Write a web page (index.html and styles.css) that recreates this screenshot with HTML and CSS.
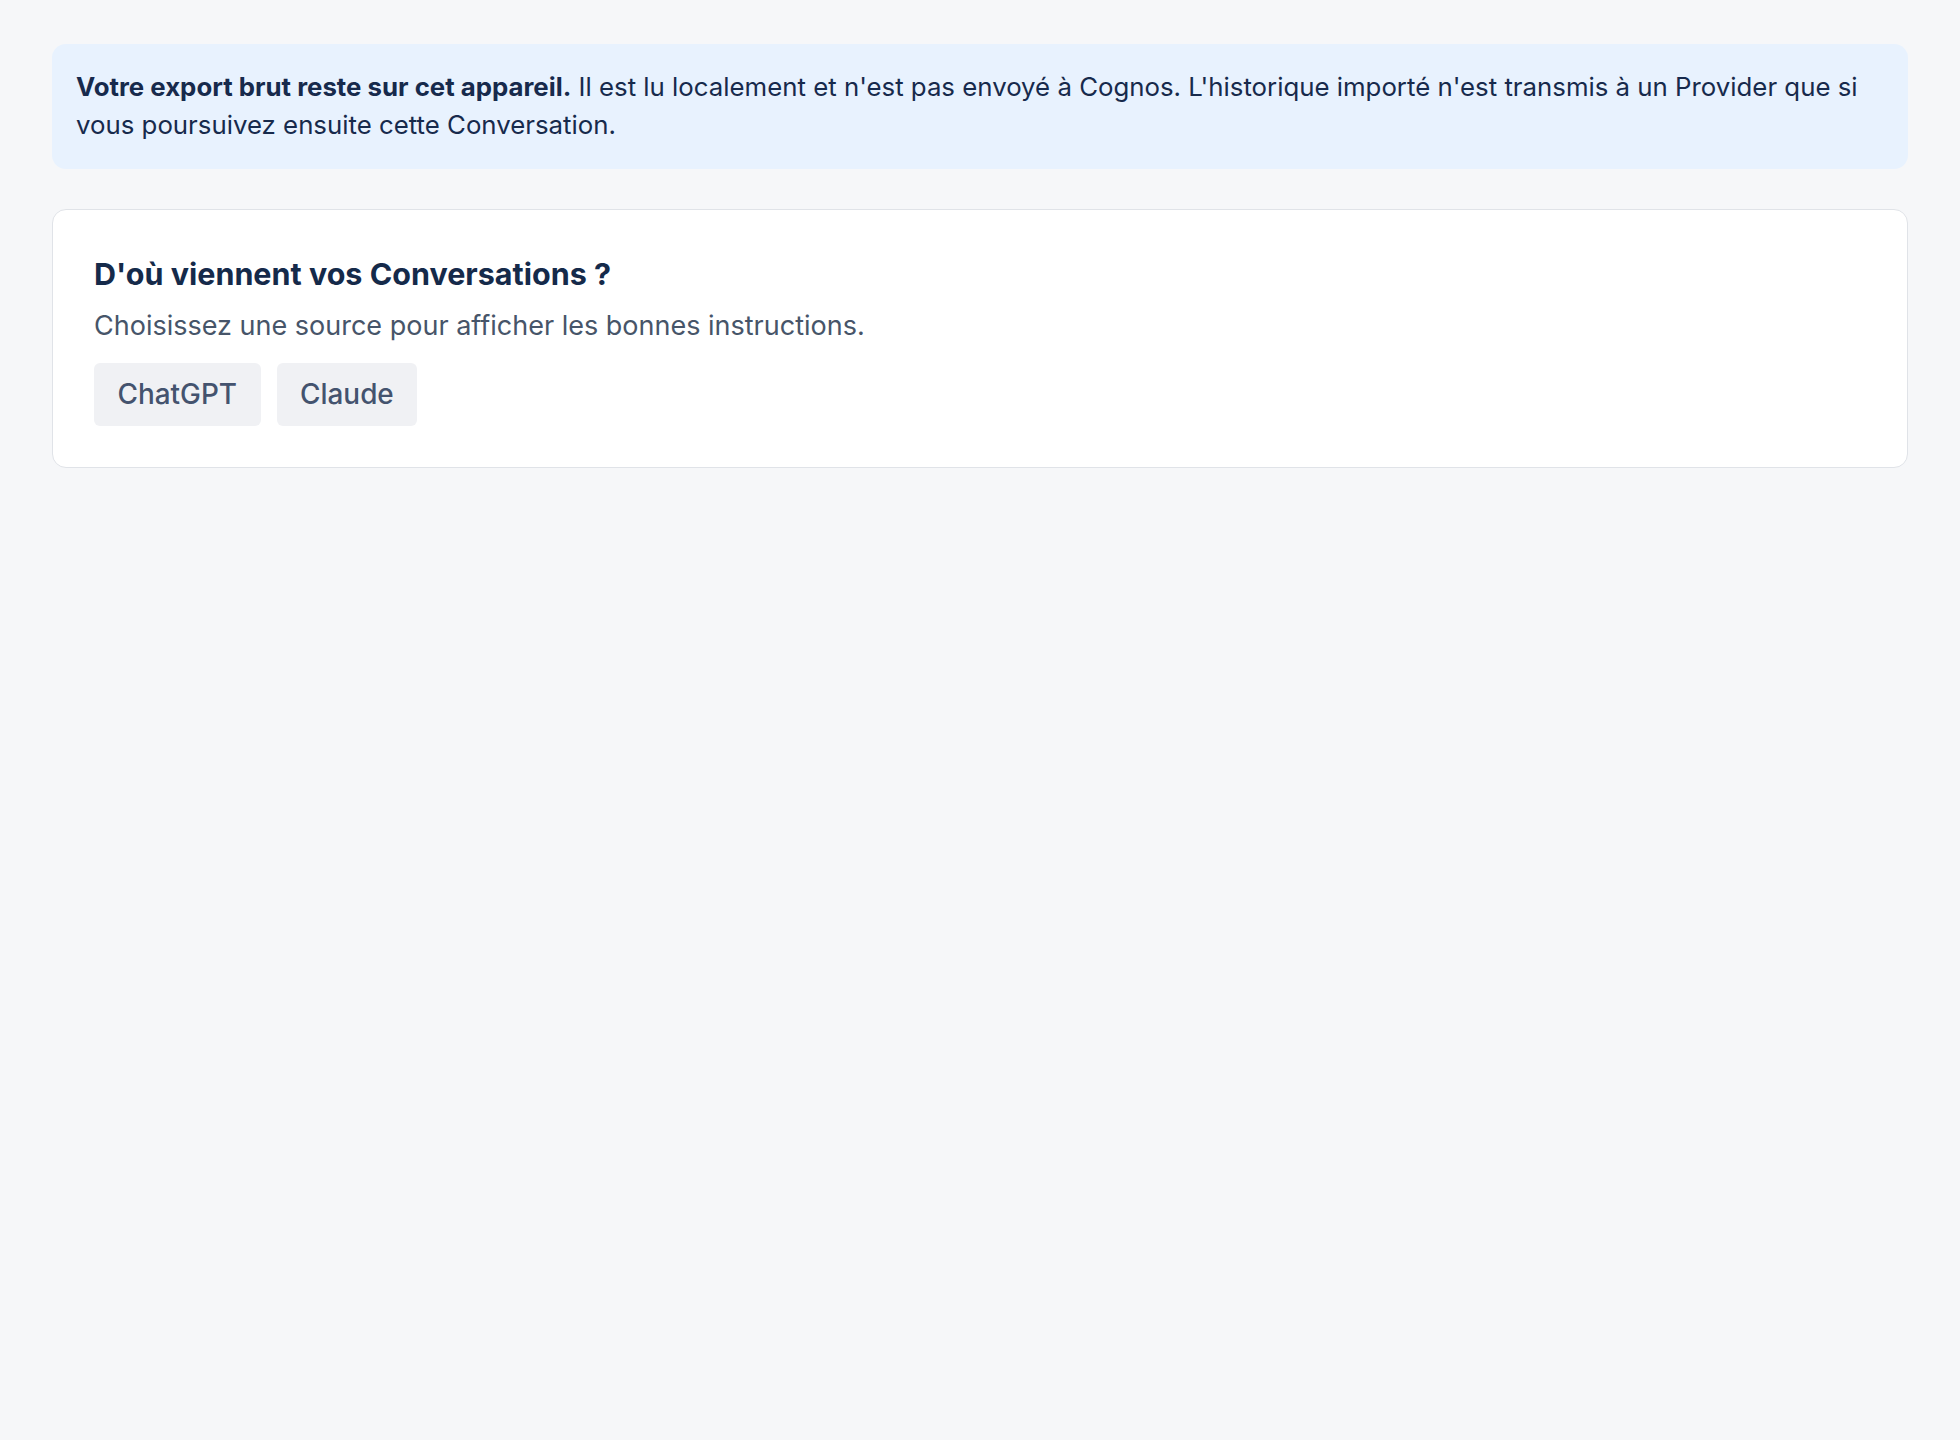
FILE: index.html
```html
<!DOCTYPE html>
<html lang="fr">
<head>
<meta charset="utf-8">
<title>Importer des Conversations</title>
<link rel="stylesheet" href="styles.css">
</head>
<body>
<main class="page">
  <div class="notice">
    <p class="notice-text"><strong>Votre export brut reste sur cet appareil.</strong> Il est lu localement et n'est pas envoyé à Cognos. L'historique importé n'est transmis à un Provider que si vous poursuivez ensuite cette Conversation.</p>
  </div>
  <section class="card">
    <h2 class="card-title">D'où viennent vos Conversations ?</h2>
    <p class="card-text">Choisissez une source pour afficher les bonnes instructions.</p>
    <div class="sources">
      <button class="source-btn" type="button">ChatGPT</button>
      <button class="source-btn" type="button">Claude</button>
    </div>
  </section>
</main>
</body>
</html>
```

FILE: styles.css
```css
* {
  box-sizing: border-box;
}

html,
body {
  margin: 0;
  background: #f6f7f9;
}

body {
  font-family: Inter, "Noto Sans", "Liberation Sans", sans-serif;
  color: #172a4c;
}

.page {
  padding: 44px 52px;
  display: flex;
  flex-direction: column;
  gap: 40px;
}

.notice {
  background: #e8f2fe;
  border-radius: 14px;
  padding: 24px 24px 26px;
}

.notice-text {
  margin: 0;
  font-size: 25.8px;
  line-height: 37.5px;
  color: #172a4c;
}

.notice-text strong {
  font-weight: 700;
}

.card {
  background: #ffffff;
  border: 1.5px solid #e0e3e8;
  border-radius: 14px;
  padding: 42px 41px 41px;
}

.card-title {
  margin: 0;
  font-size: 30.5px;
  line-height: 44px;
  font-weight: 700;
  color: #152a4a;
}

.card-text {
  margin: 9.5px 0 0;
  font-size: 27px;
  line-height: 40px;
  color: #475569;
}

.sources {
  display: flex;
  gap: 16px;
  margin-top: 17.5px;
}

.source-btn {
  font-family: inherit;
  font-size: 27.9px;
  font-weight: 500;
  color: #44536e;
  background: #f0f1f4;
  border: none;
  border-radius: 6px;
  padding: 0 23.5px;
  height: 62.5px;
  cursor: pointer;
}
```
